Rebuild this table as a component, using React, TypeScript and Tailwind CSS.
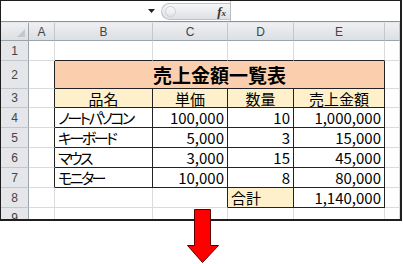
import React from "react";
import clsx from "clsx";

const rows = [
  ["ノートパソコン", "100,000", "10", "1,000,000"],
  ["キーボード", "5,000", "3", "15,000"],
  ["マウス", "3,000", "15", "45,000"],
  ["モニター", "10,000", "8", "80,000"],
];

interface CellProps {
  r?: boolean;
  b?: boolean;
  bg?: string;
  className?: string;
  children?: React.ReactNode;
}

const Cell: React.FC<CellProps> = ({ r, b, bg, className, children }) => (
  <div
    className={clsx(
      "border-r border-b flex items-center overflow-hidden whitespace-nowrap px-[3px]",
      r ? "border-r-[#222222]" : "border-r-[#d9dbdd]",
      b ? "border-b-[#222222]" : "border-b-[#d9dbdd]",
      bg ?? "bg-white",
      className
    )}>
    {children}
  </div>
);

const ColHead: React.FC<{ label?: string }> = ({ label }) => (
  <div className="border-r border-b border-r-[#c3c7cc] border-b-[#9da3aa] bg-linear-to-b from-[#eef0f2] to-[#dcdfe3] flex items-center justify-center text-[12px] text-[#444] font-['Liberation_Sans',sans-serif]">
    {label}
  </div>
);

const RowHead: React.FC<{ n: number }> = ({ n }) => (
  <div className="border-r border-b border-r-[#9da3aa] border-b-[#c3c7cc] bg-[#e4e6e9] flex items-center justify-center text-[12px] text-[#444] font-['Liberation_Sans',sans-serif]">
    {n}
  </div>
);

export default function App() {
  return (
    <div className="relative w-[403px] h-[264px] bg-white font-['Noto_Sans_CJK_JP',sans-serif] text-black overflow-hidden">
      <div className="w-[402px] h-[221px] border-l border-t border-r-2 border-b-2 border-[#1e1e1e] flex flex-col overflow-hidden">
        {/* formula bar */}
        <div className="flex h-[20px] shrink-0 bg-white">
          <div className="w-[158px] flex items-center justify-end pr-[4px]">
            <svg width="7" height="4" viewBox="0 0 7 4">
              <polygon points="0,0 7,0 3.5,4" fill="#222" />
            </svg>
          </div>
          <div className="w-[72px] flex items-center border-r border-[#b9bdc2]">
            <div className="ml-[2px] h-[17px] flex-1 rounded-l-full border border-r-0 border-[#bfc3c8] bg-linear-to-b from-[#f6f7f9] to-[#dde0e4] flex items-center">
              <div className="ml-[3px] w-[11px] h-[11px] rounded-full border border-[#cdd1d5] bg-linear-to-b from-[#f8f9fa] to-[#e3e6e9]" />
              <span className="ml-auto mr-[4px] font-['Liberation_Serif',serif] italic font-bold text-[13px] leading-none text-[#333]">
                f<span className="text-[9px]">x</span>
              </span>
            </div>
          </div>
          <div className="flex-1 bg-white" />
        </div>
        <div className="h-[2px] shrink-0 border-t border-[#8f9398] bg-[#e3e5e8]" />

        {/* sheet */}
        <div className="grid grid-cols-[28px_26px_98px_75px_66px_91px_1fr] grid-rows-[18px_20px_28px_19px_20px_20px_20px_20px_20px_20px] text-[15px] leading-none">
          {/* header row */}
          <div className="relative border-r border-b border-r-[#9da3aa] border-b-[#9da3aa] bg-linear-to-b from-[#eef0f2] to-[#dcdfe3]">
            <svg className="absolute right-[3px] bottom-[3px]" width="8" height="8" viewBox="0 0 8 8">
              <polygon points="8,0 8,8 0,8" fill="#c4c8cc" />
            </svg>
          </div>
          <ColHead label="A" />
          <ColHead label="B" />
          <ColHead label="C" />
          <ColHead label="D" />
          <ColHead label="E" />
          <ColHead />

          {/* row 1 */}
          <RowHead n={1} />
          <Cell />
          <Cell b />
          <Cell b />
          <Cell b />
          <Cell b />
          <Cell />

          {/* row 2 */}
          <RowHead n={2} />
          <Cell r />
          <Cell r b bg="bg-[#fbcfad]" className="col-span-4 justify-center text-[19px] font-bold">
            売上金額一覧表
          </Cell>
          <Cell />

          {/* row 3 */}
          <RowHead n={3} />
          <Cell r />
          <Cell r b bg="bg-[#fef0cb]" className="justify-center">品名</Cell>
          <Cell r b bg="bg-[#fef0cb]" className="justify-center">単価</Cell>
          <Cell r b bg="bg-[#fef0cb]" className="justify-center">数量</Cell>
          <Cell r b bg="bg-[#fef0cb]" className="justify-center">売上金額</Cell>
          <Cell />

          {rows.map((row, i) => (
            <React.Fragment key={row[0]}>
              <RowHead n={i + 4} />
              <Cell r />
              <Cell r b className="[font-feature-settings:'palt'] tracking-[-2.5px]">{row[0]}</Cell>
              <Cell r b className="justify-end">{row[1]}</Cell>
              <Cell r b className="justify-end">{row[2]}</Cell>
              <Cell r b className="justify-end">{row[3]}</Cell>
              <Cell />
            </React.Fragment>
          ))}

          {/* row 8 */}
          <RowHead n={8} />
          <Cell />
          <Cell />
          <Cell r />
          <Cell r b bg="bg-[#fef0cb]">合計</Cell>
          <Cell r b className="justify-end">1,140,000</Cell>
          <Cell />

          {/* row 9 */}
          <RowHead n={9} />
          <Cell />
          <Cell />
          <Cell />
          <Cell />
          <Cell />
          <Cell />
        </div>
      </div>

      {/* arrow */}
      <svg className="absolute left-[187px] top-[209px]" width="32" height="55" viewBox="0 0 32 55">
        <polygon
          points="7.5,0.5 23.5,0.5 23.5,36.5 31.5,36.5 15.5,53.5 0.5,36.5 7.5,36.5"
          fill="#ff0000"
          stroke="#5a0000"
          strokeWidth="1"
        />
      </svg>
    </div>
  );
}
